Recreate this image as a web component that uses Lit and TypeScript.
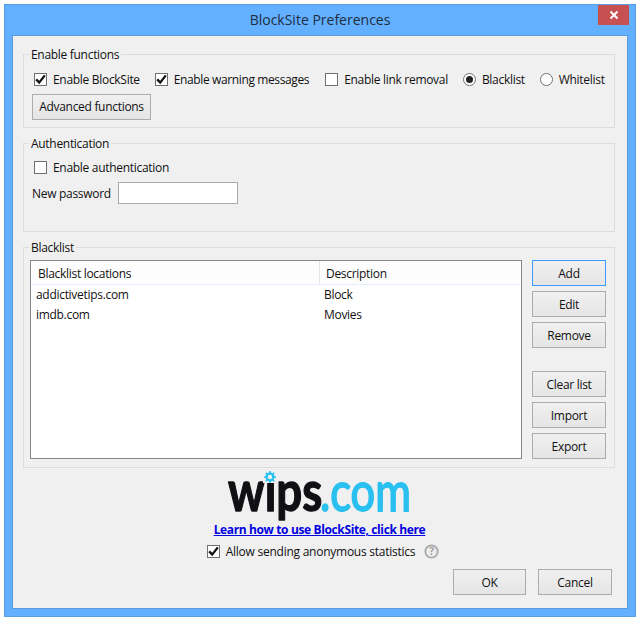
import { LitElement, html, css } from "lit";
import { customElement } from "lit/decorators.js";

const check = html`<svg class="tick" width="11" height="11" viewBox="0 0 11 11"><path d="M1.2 5.4 L4.2 8.6 L9.8 1.4" fill="none" stroke="#111" stroke-width="2.3"/></svg>`;

@customElement("app-root")
export class AppRoot extends LitElement {
  static styles = css`
    :host { display: block; width: 641px; height: 621px; background: #fff; font-family: "Open Sans", "Noto Sans", sans-serif; font-size: 12px; letter-spacing: -0.3px; color: #111; box-sizing: border-box; padding: 4px 5px 4px 4px; }
    * { box-sizing: border-box; }
    .window { height: 613px; background: #62b0ff; border: 1px solid #5a9fe0; display: flex; flex-direction: column; padding: 0 7px 7px 7px; }
    .titlebar { height: 30px; flex: none; display: flex; align-items: center; justify-content: center; position: relative; font-size: 14px; letter-spacing: 0; color: #1f2d3d; padding-bottom: 1px; }
    .close { position: absolute; top: 0; right: -1px; width: 31px; height: 20px; background: #c75050; display: flex; align-items: center; justify-content: center; }
    .content { flex: 1; background: #f0f0f0; border: 1px solid #5a9ad8; padding: 10px 12px 0 10px; display: flex; flex-direction: column; }
    fieldset { margin: 0; border: 1px solid #dcdcdc; min-width: 0; }
    legend { padding: 0 2px; margin-left: -3px; line-height: 18px; height: 16px; }
    .g1 { height: 82px; padding: 7px 8px 0 8px; }
    .g2 { height: 97px; margin-top: 7px; padding: 6px 8px 0 8px; }
    .g3 { height: 229px; margin-top: 7px; padding: 5px 8px 0 6px; }
    .g3 legend { margin-left: -1px; }
    .row { display: flex; align-items: center; height: 20px; padding-left: 2px; white-space: nowrap; }
    .row.opts { gap: 15px; }
    .cb { display: inline-flex; align-items: center; gap: 6px; white-space: nowrap; }
    .cb.tight { letter-spacing: -0.38px; margin-right: 1px; }
    .box { width: 13px; height: 13px; background: #fff; border: 1px solid #707070; display: inline-flex; align-items: center; justify-content: center; flex: none; }
    .radio { width: 13px; height: 13px; border-radius: 50%; background: #fff; border: 1px solid #707070; display: inline-flex; align-items: center; justify-content: center; flex: none; }
    .radio i { width: 7px; height: 7px; border-radius: 50%; background: #222; }
    button { font: inherit; letter-spacing: inherit; color: #111; background: linear-gradient(#f0f0f0, #e5e5e5); border: 1px solid #acacac; padding: 0; height: 26px; display: block; }
    button.def { border-color: #3c9bff; }
    .adv { width: 119px; margin-top: 5px; padding-bottom: 2px; }
    .pw { display: flex; align-items: center; gap: 7px; margin-top: 5px; }
    .input { width: 120px; height: 22px; background: #fff; border: 1px solid #ababab; }
    .bl { display: flex; gap: 10px; }
    .list { width: 492px; height: 199px; background: #fff; border: 1px solid #828790; }
    .head { display: flex; height: 24px; border-bottom: 1px solid #e6effb; background: #fdfdfd; margin-right: 1px; }
    .head div { padding-left: 7px; line-height: 26px; }
    .head .c1 { width: 289px; border-right: 1px solid #e5e5e5; }
    .head .c2 { padding-left: 6px; }
    .item { display: flex; height: 20px; line-height: 20px; padding-left: 5px; }
    .item .c1 { width: 288px; }
    .btns { display: flex; flex-direction: column; gap: 5px; width: 74px; }
    .btns button { width: 74px; }
    .spacer { height: 13px; }
    .footer { display: flex; flex-direction: column; align-items: center; }
    .logo { display: block; width: 200px; height: 54px; overflow: visible; margin-left: 1px; }
    .logo text { font-family: "Lato", sans-serif; font-size: 55px; letter-spacing: 0; stroke-linejoin: round; }
    .logo .wips { font-weight: 700; fill: #101014; stroke: #101014; stroke-width: 1.3px; }
    .logo .com { font-weight: 400; fill: #29c0f0; stroke: #29c0f0; stroke-width: 1.8px; }
    .link { font-weight: 700; color: #0000e0; text-decoration: underline; line-height: 16px; letter-spacing: -0.37px; margin-left: 1px; }
    .stats { display: flex; align-items: center; margin-top: 4px; height: 18px; margin-left: 8px; letter-spacing: -0.25px; }
    .help { margin-left: 9px; width: 15px; height: 15px; }
    .actions { display: flex; justify-content: flex-end; gap: 12px; margin-top: 9px; margin-right: 3px; }
    .actions button { width: 73px; }
    .actions button + button { width: 74px; }
  `;

  private box(on: boolean, label: string, tight = false) {
    return html`<span class="cb ${tight ? "tight" : ""}"><span class="box">${on ? check : ""}</span>${label}</span>`;
  }
  private radio(on: boolean, label: string) {
    return html`<span class="cb"><span class="radio">${on ? html`<i></i>` : ""}</span>${label}</span>`;
  }

  render() {
    return html`<div class="window">
      <div class="titlebar">BlockSite Preferences
        <div class="close"><svg width="10" height="10" viewBox="0 0 10 10"><path d="M1.5 1.5 L8.5 8.5 M8.5 1.5 L1.5 8.5" stroke="#fff" stroke-width="2" fill="none"/></svg></div>
      </div>
      <div class="content">
        <fieldset class="g1"><legend>Enable functions</legend>
          <div class="row opts">${this.box(true, "Enable BlockSite")}${this.box(true, "Enable warning messages", true)}${this.box(false, "Enable link removal")}${this.radio(true, "Blacklist")}${this.radio(false, "Whitelist")}</div>
          <button class="adv">Advanced functions</button>
        </fieldset>
        <fieldset class="g2"><legend>Authentication</legend>
          <div class="row">${this.box(false, "Enable authentication")}</div>
          <div class="pw"><span>New password</span><div class="input"></div></div>
        </fieldset>
        <fieldset class="g3"><legend>Blacklist</legend>
          <div class="bl">
            <div class="list">
              <div class="head"><div class="c1">Blacklist locations</div><div class="c2">Description</div></div>
              <div class="item"><div class="c1">addictivetips.com</div><div>Block</div></div>
              <div class="item"><div class="c1">imdb.com</div><div>Movies</div></div>
            </div>
            <div class="btns">
              <button class="def">Add</button><button>Edit</button><button>Remove</button>
              <div class="spacer"></div>
              <button>Clear list</button><button>Import</button><button>Export</button>
            </div>
          </div>
        </fieldset>
        <div class="footer">
          <svg class="logo" viewBox="0 0 200 54">
            <text class="wips" transform="translate(8 43) scale(.83 1)">wips</text>
            <text class="com" transform="translate(100 43) scale(.79 1)">.com</text>
            <rect x="43" y="0" width="14" height="15" fill="#f0f0f0"/>
            <circle cx="50" cy="9" r="3.4" fill="none" stroke="#29c0f0" stroke-width="2.4"/>
            <path d="M50 3V5M50 13V15M44 9H46M54 9H56M45.8 4.8L47.2 6.2M52.8 11.8L54.2 13.2M54.2 4.8L52.8 6.2M47.2 11.8L45.8 13.2" stroke="#29c0f0" stroke-width="1.6"/>
          </svg>
          <span class="link">Learn how to use BlockSite, click here</span>
          <div class="stats">${this.box(true, "Allow sending anonymous statistics")}
            <svg class="help" viewBox="0 0 15 15"><circle cx="7.5" cy="7.5" r="6.2" fill="#eee" stroke="#a8a8a8" stroke-width="1.8"/><text x="7.5" y="11" text-anchor="middle" font-size="10" font-weight="700" fill="#a0a0a0">?</text></svg>
          </div>
        </div>
        <div class="actions"><button>OK</button><button>Cancel</button></div>
      </div>
    </div>`;
  }
}
